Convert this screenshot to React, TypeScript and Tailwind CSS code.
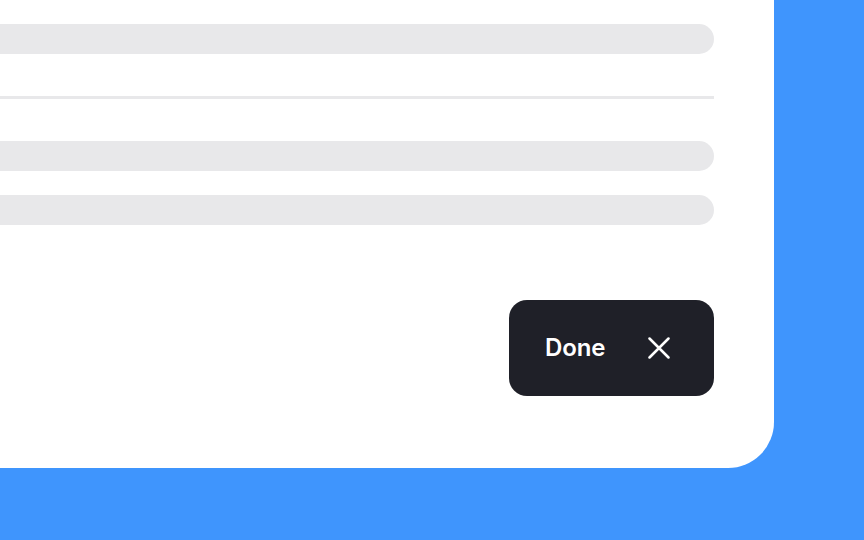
export default function App() {
  return (
    <div className="w-[864px] h-[540px] bg-[#3f95fd] overflow-hidden" style={{ fontFamily: 'Inter, "Noto Sans", sans-serif' }}>
      <div className="w-[774px] h-[468px] bg-white rounded-br-[46px] pr-[60px] pt-[24px] flex flex-col">
        <div className="h-[30px] bg-[#e8e8ea] rounded-r-full" />
        <div className="h-[3px] mt-[42px] bg-[#e8e8ea]" />
        <div className="h-[30px] mt-[42px] bg-[#e8e8ea] rounded-r-full" />
        <div className="h-[30px] mt-[24px] bg-[#e8e8ea] rounded-r-full" />
        <div className="mt-[75px] flex justify-end">
          <button className="w-[205px] h-[96px] bg-[#1f2028] rounded-[18px] flex items-center pl-[36px] text-white">
            <span className="text-[24px] font-semibold leading-none tracking-[-0.005em]">Done</span>
            <svg className="ml-[43px]" width="22" height="22" viewBox="0 0 22 22" fill="none" stroke="white" strokeWidth="2.5" strokeLinecap="round">
              <path d="M1.5 1.5L20.5 20.5M20.5 1.5L1.5 20.5" />
            </svg>
          </button>
        </div>
      </div>
    </div>
  );
}
